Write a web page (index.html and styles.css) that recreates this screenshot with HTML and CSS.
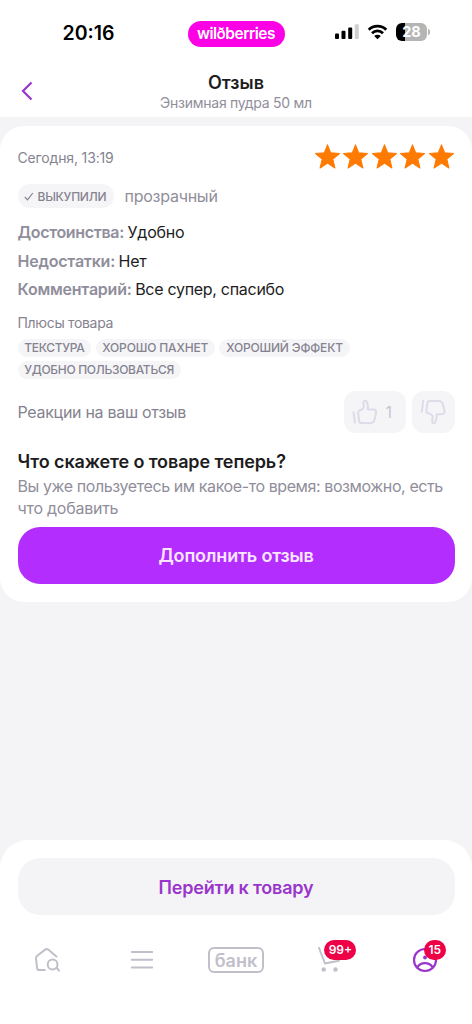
FILE: index.html
```html
<!DOCTYPE html>
<html lang="ru">
<head>
<meta charset="utf-8">
<title>Отзыв</title>
<link rel="stylesheet" href="styles.css">
</head>
<body>
<div class="screen">
  <header class="top">
    <div class="status">
      <span class="clock">20:16</span>
      <span class="brand"><span class="brand-text">wilðberries</span></span>
      <span class="indicators">
        <svg class="signal" width="24" height="16" viewBox="0 0 24 16"><rect x="0" y="9.5" width="4" height="5.5" rx="1"/><rect x="6.5" y="6.8" width="4" height="8.2" rx="1"/><rect x="13.2" y="3.4" width="4" height="11.6" rx="1"/><rect x="19.8" y="0.2" width="4" height="14.8" rx="1" fill="#cfcfcf"/></svg>
        <svg class="wifi" width="21" height="16" viewBox="0 0 22 16"><path d="M1.800 5.600A13.200 13.200 0 0 1 20.200 5.600M5.200 9.200A8.500 8.500 0 0 1 16.800 9.200" fill="none" stroke="#000" stroke-width="2.900"/><path d="M7.500 12.200A5 5 0 0 1 14.500 12.200L11 15.700Z"/></svg>
        <span class="battery"><span class="level">28</span></span><i class="battery-cap"></i>
      </span>
    </div>
    <div class="titlebar">
      <svg class="back" width="12" height="20" viewBox="0 0 12 20"><path d="M10.500 1.500L2 10L10.500 18.500" fill="none" stroke="#9a35cc" stroke-width="2.200"/></svg>
      <div class="titles">
        <h1>Отзыв</h1>
        <p class="product">Энзимная пудра 50 мл</p>
      </div>
    </div>
  </header>

  <main class="card">
    <div class="card-head">
      <span class="date">Сегодня, 13:19</span>
      <span class="stars">
        <svg class="star" viewBox="0 0 24 24"><use href="#star"/></svg>
        <svg class="star" viewBox="0 0 24 24"><use href="#star"/></svg>
        <svg class="star" viewBox="0 0 24 24"><use href="#star"/></svg>
        <svg class="star" viewBox="0 0 24 24"><use href="#star"/></svg>
        <svg class="star" viewBox="0 0 24 24"><path id="star" d="M12 0.800L15.100 8.500L23.500 9.100L17.100 14.400L19.100 23L12 18.400L4.900 23L6.900 14.400L0.500 9.100L8.900 8.500Z" fill="#ff7a00" stroke="#ff7a00" stroke-width="1" stroke-linejoin="round"/></svg>
      </span>
    </div>
    <div class="variant">
      <span class="bought"><svg width="10" height="9" viewBox="0 0 10 9"><path d="M0.800 5L3.500 7.800L8.800 1" fill="none" stroke="#85838f" stroke-width="1.200"/></svg><span class="bought-text">ВЫКУПИЛИ</span></span>
      <span class="shade">прозрачный</span>
    </div>
    <dl class="facts">
      <div class="fact"><dt class="pros">Достоинства:</dt><dd>Удобно</dd></div>
      <div class="fact"><dt>Недостатки:</dt><dd>Нет</dd></div>
      <div class="fact"><dt>Комментарий:</dt><dd class="comment">Все супер, спасибо</dd></div>
    </dl>
    <p class="pros-title">Плюсы товара</p>
    <div class="tags">
      <span class="tag">ТЕКСТУРА</span><span class="tag tight">ХОРОШО ПАХНЕТ</span><span class="tag loose">ХОРОШИЙ ЭФФЕКТ</span><span class="tag">УДОБНО ПОЛЬЗОВАТЬСЯ</span>
    </div>
    <div class="reactions">
      <span class="reactions-label">Реакции на ваш отзыв</span>
      <span class="vote like"><svg width="26" height="26" viewBox="0 0 26 26"><path d="M1.500 12.500L3 24.500M6.200 13.600C6.100 12.400 6.600 11.900 7.600 11.500L10.800 9.800C11.700 9.200 11.800 8.400 11.700 7.200L11.400 3.500C11.300 1.600 14.100 1 14.900 2.900L15.900 6.500L15.700 10.300L21.700 10.500C23.600 10.600 24.400 11.600 24.100 13.300L22.800 19.600C22.300 22.300 20.700 24.300 18.200 24.200L10 24.100C8.200 24.200 7.200 23.300 7 21.600Z"/></svg><span class="count">1</span></span>
      <span class="vote dislike"><svg width="26" height="26" viewBox="0 0 26 26"><path d="M3.200 1.200L1.800 13.500M7.300 4.300C7.500 2.800 8.500 2 10 2L18.500 1.900C20.800 1.900 22.500 3.500 23.100 5.700L24.500 12.200C24.800 13.900 24 15 22.300 15L16.600 15.400L16.700 18.700L15.200 23.100C14.300 25.100 11.900 24.200 12.200 22.300L12.600 18C12.600 16.700 12.400 16 11.500 15.600L7.700 14.100C6.700 13.700 6.300 13.200 6.400 12.100Z"/></svg></span>
    </div>
    <h2>Что скажете о товаре теперь?</h2>
    <p class="hint">Вы уже пользуетесь им какое-то время: возможно, есть<br><span class="hint-end">что добавить</span></p>
    <button class="primary"><span>Дополнить отзыв</span></button>
  </main>

  <footer class="bottom">
    <button class="secondary"><span>Перейти к товару</span></button>
    <nav class="tabs">
      <span class="tab"><svg class="home" width="26" height="26" viewBox="0 0 26 26"><path d="M10.800 23H5.600Q3 23 3 20.400L2 11.500Q1.900 9.700 3.200 8.700L11.200 2.600Q12.700 1.500 14.200 2.600L22.400 9.500M22.600 20.600L25 23.700"/><circle cx="18.600" cy="17.500" r="4.900"/></svg></span>
      <span class="tab"><svg width="24" height="20" viewBox="0 0 24 20"><path d="M1.800 2H22.200M1.800 9.800H22.200M1.800 17.600H22.200"/></svg></span>
      <span class="tab"><span class="bank"><span>банк</span></span></span>
      <span class="tab"><span class="icon"><svg width="26" height="26" viewBox="0 0 26 26"><path d="M2 1L8 16.500L22 13.700"/><circle class="wheel" cx="6.700" cy="22.500" r="2.200"/><circle class="wheel" cx="18.500" cy="22.500" r="2.200"/></svg><b class="badge wide">99+</b></span></span>
      <span class="tab"><span class="icon"><svg class="profile" width="26" height="26" viewBox="0 0 26 26"><circle cx="13" cy="13" r="11"/><path d="M5.200 20.500C8.500 14.600 17.500 14.600 20.800 20.500"/><circle class="face" cx="13" cy="10.500" r="1.900"/></svg><b class="badge">15</b></span></span>
    </nav>
  </footer>
</div>
</body>
</html>
```
FILE: styles.css
```css
* { box-sizing: border-box; margin: 0; padding: 0; }
body { font-family: Inter, "Liberation Sans", sans-serif; background: #f4f4f6; color: #1d1c21; }
button { border: 0; font: inherit; display: block; }
svg { display: block; flex: none; }
span, dt, dd, p { white-space: nowrap; }
.screen { width: 472px; height: 1024px; display: flex; flex-direction: column; overflow: hidden; }

.top { height: 117px; background: #fff; flex: none; }
.status { height: 66px; display: grid; grid-template-columns: 1fr 97px 1fr; align-items: center; }
.clock { font-size: 19.500px; font-weight: 600; line-height: 24px; color: #000; padding-left: 62.500px; margin-top: -1px; }
.brand { height: 26px; border-radius: 13px; margin-top: 2px; background: #fc00e6; color: #fff; display: flex; align-items: center; justify-content: center; }
.brand-text { font-size: 15.500px; font-weight: 600; line-height: 24px; letter-spacing: -0.500px; }
.indicators { display: flex; align-items: center; padding-left: 50px; margin-top: -2px; }
.wifi { margin: 0 0 0 8px; }
.battery { width: 31px; height: 18px; margin-left: 8.500px; border-radius: 6px; background: linear-gradient(90deg, #000 9px, #b5b5b5 9px); display: flex; justify-content: center; }
.level { color: #fff; font-size: 14.500px; font-weight: 700; line-height: 18px; }
.battery-cap { width: 2px; height: 6px; margin-left: 1px; border-radius: 0 2px 2px 0; background: #b5b5b5; }
.titlebar { display: grid; grid-template-columns: 38px 1fr 38px; align-items: center; height: 51px; }
.back { margin: -2px 0 0 21px; }
.titles { text-align: center; }
h1 { font-size: 18px; font-weight: 600; line-height: 22px; margin-top: 2px; }
.product { font-size: 14px; line-height: 20px; margin-top: -1px; color: #908e9a; letter-spacing: -0.260px; }

.card { margin-top: 9px; height: 476px; background: #fff; border-radius: 24px; padding: 17px 17.500px 0; flex: none; }
.card-head { display: flex; justify-content: space-between; align-items: center; height: 29px; }
.date, .pros-title { font-size: 14px; color: #85838f; line-height: 20px; letter-spacing: -0.150px; }
.stars { display: flex; gap: 3.600px; margin: -2px 0.500px 0 0; }
.star { width: 25px; height: 25px; }
.variant { display: flex; align-items: center; gap: 11px; margin-top: 12px; height: 24px; }
.bought { display: flex; align-items: center; gap: 4px; width: 96px; height: 24px; padding-left: 6px; border-radius: 12px; background: #f5f5f8; color: #85838f; }
.bought-text { font-size: 12px; font-weight: 500; letter-spacing: -0.250px; }
.shade { font-size: 16px; color: #908e9a; letter-spacing: -0.250px; }
.facts { margin-top: 10px; }
.fact { display: flex; gap: 3.500px; line-height: 28.500px; font-size: 16px; letter-spacing: -0.220px; }
dt { font-weight: 600; color: #908e9c; }
.pros { letter-spacing: -0.330px; }
.comment { letter-spacing: -0.290px; }
.pros-title { margin-top: 9px; letter-spacing: -0.330px; }
.tags { display: flex; flex-wrap: wrap; gap: 4px 4.500px; margin-top: 6px; }
.tag { height: 18px; padding: 0 6.700px; border-radius: 9px; background: #f5f5f8; color: #85838f; font-size: 12px; font-weight: 500; line-height: 18px; letter-spacing: -0.300px; }
.tight { letter-spacing: -0.150px; }
.loose { letter-spacing: -0.160px; }
.reactions { display: flex; align-items: center; gap: 6px; height: 42px; margin-top: 12px; }
.reactions-label { flex: 1; font-size: 16px; color: #85838f; letter-spacing: -0.290px; }
.vote { display: flex; align-items: center; height: 42px; border-radius: 12px; background: #f5f5f8; }
.vote svg { fill: none; stroke: #dddbe8; stroke-width: 2; stroke-linejoin: round; }
.like { width: 62px; padding-left: 8px; gap: 8px; }
.dislike { width: 43px; padding-left: 8px; }
.count { color: #c8c6d2; font-size: 16px; }
h2 { font-size: 18px; font-weight: 600; line-height: 24px; margin-top: 17px; letter-spacing: -0.110px; }
.hint { font-size: 16px; line-height: 22px; color: #908e9a; margin-top: 1px; letter-spacing: -0.410px; }
.hint-end { letter-spacing: -0.250px; }
.primary, .secondary { width: 437px; height: 57px; padding-top: 1px; border-radius: 22px; font-size: 18px; font-weight: 600; letter-spacing: -0.200px; }
.primary { margin-top: 8px; background: #b32dff; color: #fbe6ff; }
.secondary { background: #f4f4f7; color: #9a35cc; }

.bottom { margin-top: auto; height: 184px; border-radius: 28px 28px 0 0; background: #fff; padding: 18px 17.500px 0; }
.tabs { display: grid; grid-template-columns: repeat(5, 94.400px); margin: 25px -17.500px 0; height: 40px; }
.tab { display: flex; align-items: center; justify-content: center; }
.tab svg { fill: none; stroke: #c1bfca; stroke-width: 2; stroke-linecap: round; stroke-linejoin: round; }
.tab .wheel { fill: #c1bfca; stroke: none; }
.tab .profile { stroke: #9a35cc; stroke-width: 2.200; }
.tab .face { fill: #9a35cc; stroke: none; }
.bank { width: 56px; height: 26px; border: 2px solid #c1bfca; border-radius: 6px; display: flex; align-items: center; justify-content: center; color: #c1bfca; font-size: 18px; font-weight: 600; }
.icon { position: relative; }
.badge { position: absolute; left: 12px; top: -7px; width: 22px; height: 20px; border-radius: 10px; background: #ee0047; color: #fff; font-size: 12px; font-weight: 600; line-height: 20px; text-align: center; }
.wide { left: 7px; width: 32px; }
```
